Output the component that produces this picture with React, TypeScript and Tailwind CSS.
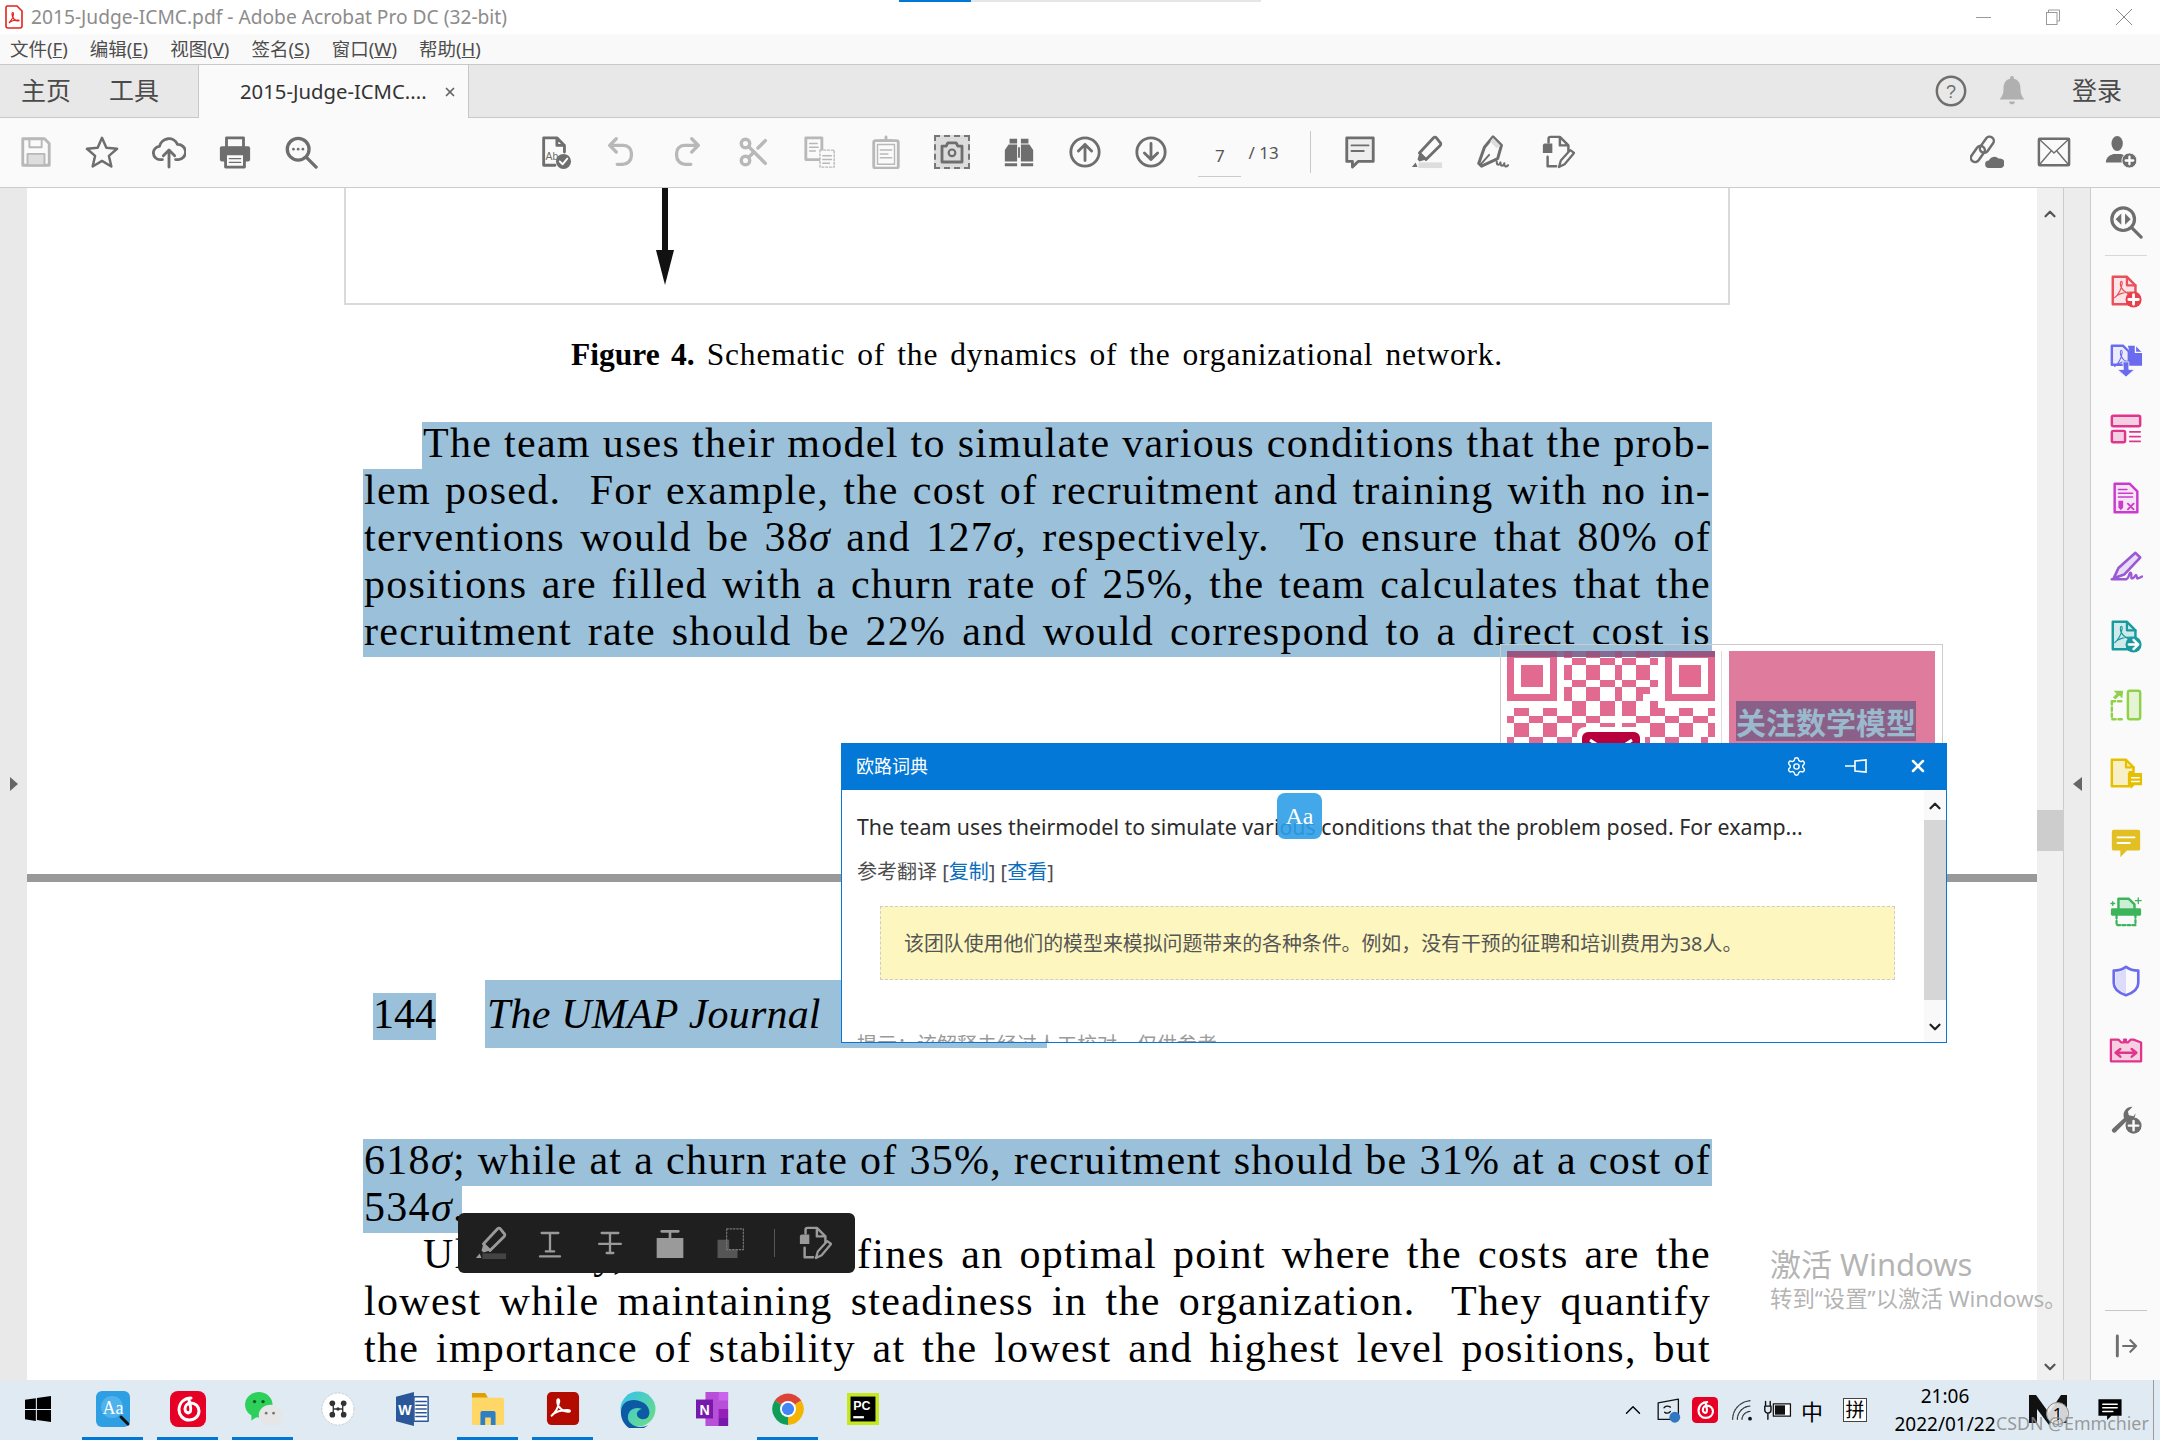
import React from 'react';
import { ChevronUp, ChevronDown, Settings, X, Scissors } from 'lucide-react';

const GRAY = '#6e6e6e';
const LIGHT = '#b8b8b8';

const Ic: React.FC<{ s?: number; w?: number; h?: number; vb?: string; children: React.ReactNode }> = ({ s = 34, w, h, vb = '0 0 36 36', children }) => (
    <svg width={w ?? s} height={h ?? s} viewBox={vb} fill="none" strokeLinecap="round" strokeLinejoin="round">
        {children}
    </svg>
);

const Swirl = ({ c, sw = 1.6 }: { c: string; sw?: number }) => (
    <path d="M6 25c4-3 7-9 8-15 0-3-2-3-2 0 0 6 6 11 11 11 3 0 3-2 0-2-6 0-14 2-17 6z" stroke={c} strokeWidth={sw} />
);

const Btn: React.FC<{ children: React.ReactNode; className?: string }> = ({ children, className }) => (
    <div className={'w-[66.3px] h-full flex items-center justify-center shrink-0 ' + (className ?? '')}>{children}</div>
);

const SaveIcon = () => (
    <Ic>
        <path d="M4 4h23l5 5v23H4z" stroke={LIGHT} strokeWidth="3" />
        <path d="M11 4h13v9H11z" stroke={LIGHT} strokeWidth="2" />
        <rect x="9" y="20" width="18" height="12" fill="#dedede" stroke={LIGHT} strokeWidth="2" />
    </Ic>
);
const StarIcon = () => (
    <Ic>
        <path d="M18 3l4.6 10.6 11.4 1-8.7 7.5 2.6 11.2L18 27.4 8.1 33.3l2.6-11.2L2 14.6l11.4-1z" stroke={GRAY} strokeWidth="2.6" />
    </Ic>
);
const CloudIcon = () => (
    <Ic>
        <path d="M11 26H9a7 7 0 0 1-1-14 10 10 0 0 1 19-2 8 8 0 0 1 1 16h-3" stroke={GRAY} strokeWidth="3" />
        <path d="M18 34V16M12 22l6-6 6 6" stroke={GRAY} strokeWidth="3" />
    </Ic>
);
const PrintIcon = () => (
    <Ic>
        <rect x="9" y="3" width="18" height="11" stroke={GRAY} strokeWidth="3" />
        <rect x="2" y="12" width="32" height="16" rx="2" fill={GRAY} />
        <rect x="8" y="20" width="20" height="14" fill="#fafafa" stroke={GRAY} strokeWidth="3" />
        <path d="M12 25h12M12 29h12" stroke={GRAY} strokeWidth="1.5" />
    </Ic>
);
const SearchDots = () => (
    <Ic>
        <circle cx="15" cy="15" r="11.5" stroke={GRAY} strokeWidth="3.5" />
        <path d="M24 24l10 10" stroke={GRAY} strokeWidth="3.5" />
        <circle cx="10" cy="15" r="1.4" fill={GRAY} />
        <circle cx="15" cy="15" r="1.4" fill={GRAY} />
        <circle cx="20" cy="15" r="1.4" fill={GRAY} />
    </Ic>
);
const DocCheck = () => (
    <Ic>
        <path d="M6 18V3h14l8 8v7M20 3v8h8M6 18v14h12" stroke={GRAY} strokeWidth="3" />
        <text x="8" y="26" fontSize="11" fill={GRAY} fontFamily="Liberation Sans">Ab</text>
        <circle cx="27" cy="28" r="8" fill={GRAY} />
        <path d="M23 28l3 3 5-6" stroke="#fff" strokeWidth="2" />
    </Ic>
);
const UndoIcon = ({ flip }: { flip?: boolean }) => (
    <Ic>
        <g transform={flip ? 'translate(36 0) scale(-1 1)' : undefined}>
            <path d="M13 4l-7 7 7 7M6 11h15a8 8 0 0 1 8 8v3a9 9 0 0 1-9 9h-6" stroke={LIGHT} strokeWidth="3.5" />
        </g>
    </Ic>
);
const CopyIcon = () => (
    <Ic>
        <rect x="3" y="3" width="17" height="23" stroke={LIGHT} strokeWidth="3" />
        <path d="M7 9h8M7 13h9M7 17h6" stroke={LIGHT} strokeWidth="1.6" />
        <rect x="18" y="16" width="15" height="18" fill="#fafafa" stroke={LIGHT} strokeWidth="1.5" strokeDasharray="2 2" />
        <path d="M21 22h9M21 26h9M21 30h7" stroke={LIGHT} strokeWidth="1.6" />
    </Ic>
);
const ClipIcon = () => (
    <Ic>
        <rect x="5" y="6" width="26" height="29" rx="2" stroke={LIGHT} strokeWidth="3" />
        <rect x="9" y="10" width="18" height="21" stroke={LIGHT} strokeWidth="1.5" />
        <path d="M12 6h12M18 2v4" stroke={LIGHT} strokeWidth="3" />
        <path d="M12 16h12M12 20h8M12 24h12" stroke={LIGHT} strokeWidth="1.6" />
    </Ic>
);
const CameraIcon = () => (
    <div className="w-[36px] h-[34px] bg-[#dcdcdc] border-2 border-dashed border-[#777777] flex items-center justify-center">
        <Ic s={30}>
            <path d="M6 11h5l2-4h10l2 4h5v19H6z" stroke={GRAY} strokeWidth="3.4" />
            <circle cx="18" cy="19" r="4" stroke={GRAY} strokeWidth="2.6" />
        </Ic>
    </div>
);
const BinocIcon = () => (
    <Ic>
        <path d="M8 4h8v5H8zM20 4h8v5h-8zM7 10h9v18H3V16zM20 10h9l4 6v12H20zM17 13h2v11h-2zM3 30h13v3H3zM20 30h13v3H20z" fill={GRAY} />
    </Ic>
);
const ArrowCircle = ({ down }: { down?: boolean }) => (
    <Ic>
        <circle cx="18" cy="18" r="15" stroke={GRAY} strokeWidth="3" />
        <path d={down ? 'M18 9v17M11 19l7 7 7-7' : 'M18 27V10M11 17l7-7 7 7'} stroke={GRAY} strokeWidth="3" />
    </Ic>
);
const CommentIcon = () => (
    <Ic>
        <path d="M4 3h28v25H16l-6 6v-6H4z" fill="#eeeeee" stroke={GRAY} strokeWidth="3" />
        <path d="M9 11h18M9 17h13" stroke={GRAY} strokeWidth="2" />
    </Ic>
);
const HighlightIcon = ({ c = GRAY, bar = '#dddddd', fill = 'none' }: { c?: string; bar?: string; fill?: string }) => (
    <Ic>
        <rect x="10" y="29" width="25" height="6" fill={bar} />
        <path d="M33 8l-4-5a2 2 0 0 0-3 0L11 19l7 7L33 11a2 2 0 0 0 0-3z" fill={fill} stroke={c} strokeWidth="3" />
        <path d="M11 19l-2 7 2 2 7-2z" fill={c} />
        <path d="M7 29l-4 5h6z" fill={c} />
    </Ic>
);
const SignIcon = () => (
    <Ic>
        <path d="M19 2l9 9-4 14-17 8-3-3 6-17z" stroke={GRAY} strokeWidth="3.2" />
        <path d="M19 3l8 8-4 3-7-7z" fill="#dddddd" />
        <path d="M6 31l9-10" stroke={GRAY} strokeWidth="2" />
        <path d="M23 28c0 5 3 4 4 1 0 5 3 4 4 1 0 4 2 4 4 2" stroke={GRAY} strokeWidth="2.2" />
    </Ic>
);
const DocEdit = ({ c = GRAY }: { c?: string }) => (
    <Ic>
        <path d="M2 11a2 2 0 0 1 2-2h8v10H2z" fill={c} />
        <path d="M8 8V4a2 2 0 0 1 2-2h10l9 9v6M20 2v9h9M7 23v10h9" stroke={c} strokeWidth="2.6" />
        <path d="M19 34l2-7 10-11 4 3-10 12z" stroke={c} strokeWidth="2.4" />
    </Ic>
);
const LinkCloud = () => (
    <Ic>
        <rect x="-1" y="15" width="19" height="9" rx="4.5" transform="rotate(-55 9 20)" stroke={GRAY} strokeWidth="2.6" />
        <rect x="9" y="6" width="19" height="9" rx="4.5" transform="rotate(-55 18 11)" stroke={GRAY} strokeWidth="2.6" />
        <path d="M20 35a4 4 0 0 1 0-8 6 6 0 0 1 10-2 5 5 0 0 1 3 10z" fill={GRAY} />
    </Ic>
);
const MailIcon = () => (
    <Ic>
        <rect x="2" y="4" width="32" height="28" rx="1" stroke={GRAY} strokeWidth="2.6" />
        <path d="M3 5l15 14L33 5M3 31l12-14M33 31L21 17" stroke={GRAY} strokeWidth="1.5" />
    </Ic>
);
const UserPlus = () => (
    <Ic>
        <ellipse cx="15" cy="9" rx="6" ry="8" fill={GRAY} />
        <path d="M3 29c0-6 5-8 8-9h8c3 1 5 2 6 4v5z" fill={GRAY} />
        <circle cx="28" cy="27" r="8" fill={GRAY} stroke="#fafafa" strokeWidth="1" />
        <path d="M28 23v8M24 27h8" stroke="#fff" strokeWidth="2.4" />
    </Ic>
);

const rail: React.ReactNode[] = [
    <Ic key="red">
        <path d="M4 3h15l9 9v20H4z" fill="#fde4e6" stroke="#e8505b" strokeWidth="2.6" />
        <path d="M19 3v9h9" stroke="#e8505b" strokeWidth="2.4" />
        <Swirl c="#e8505b" sw={1.2} />
        <circle cx="26" cy="27" r="8.5" fill="#e8404c" />
        <path d="M26 22v10M21 27h10" stroke="#fff" strokeWidth="3" />
    </Ic>,
    <Ic key="blue">
        <path d="M3 3h12l6 6v14H3z" fill="#ecebfd" stroke="#6a6ced" strokeWidth="2.6" />
        <path d="M20 3h8l7 7v14H22V10z" fill="#6a6ced" />
        <path d="M28 3v7h7" stroke="#fff" strokeWidth="1.4" />
        <Swirl c="#6a6ced" sw={1.1} />
        <path d="M15 20h6v8h6l-9 8-9-8h6z" fill="#6a6ced" stroke="#fafafa" strokeWidth="0.8" />
    </Ic>,
    <Ic key="layout">
        <rect x="3" y="4" width="30" height="11" rx="1.5" fill="#f6cfe3" stroke="#e0358c" strokeWidth="2.6" />
        <rect x="3" y="20" width="14" height="12" rx="1.5" fill="#f6cfe3" stroke="#e0358c" strokeWidth="2.6" />
        <path d="M22 21h11M22 26h11M22 31h11" stroke="#e0358c" strokeWidth="1.8" />
    </Ic>,
    <Ic key="form">
        <path d="M6 3h16l8 8v22H6z" fill="#f8e4f8" stroke="#c93cc9" strokeWidth="2.6" />
        <path d="M10 9h9M10 13h15M10 17h15" stroke="#c93cc9" strokeWidth="1.6" />
        <path d="M10 21h5v7l-2.5 3-2.500-3z" fill="#c93cc9" />
        <path d="M20 24l6 6M26 24l-6 6" stroke="#c93cc9" strokeWidth="2" />
    </Ic>,
    <Ic key="sign">
        <path d="M28 3l5 5-17 18-11 4 5-11z" fill="#e8dcf8" stroke="#9b59d6" strokeWidth="2.8" />
        <path d="M3 31h14" stroke="#9b59d6" strokeWidth="2.6" />
        <path d="M18 31c4-1 3-8 5-7s-1 7 2 6 3-5 4-3 0 4 2 3 2-1 4-2" stroke="#9b59d6" strokeWidth="2.4" />
    </Ic>,
    <Ic key="teal">
        <path d="M4 3h15l9 9v20H4z" fill="#cfeaea" stroke="#1a9a9e" strokeWidth="2.6" />
        <path d="M19 3v9h9" stroke="#1a9a9e" strokeWidth="2.4" />
        <Swirl c="#1a9a9e" sw={1.2} />
        <circle cx="26" cy="27" r="8.5" fill="#1a9a9e" />
        <path d="M21 27h8M26 22l5 5-5 5" stroke="#fff" strokeWidth="2.6" />
    </Ic>,
    <Ic key="green">
        <rect x="20" y="3" width="13" height="30" rx="2" fill="#e4f4d4" stroke="#8fd24a" strokeWidth="2.6" />
        <path d="M3 14h13M3 14v19h13" stroke="#8fd24a" strokeWidth="2.6" strokeDasharray="3.5 3" />
        <path d="M15 3L5 3l3 3-4 4 3 2 4-4 3 3z" fill="#8fd24a" />
    </Ic>,
    <Ic key="yellow">
        <path d="M3 3h15l8 8v5h-4v15H3z" fill="#f7efc5" stroke="#e6bf00" strokeWidth="2.6" />
        <path d="M18 3v8h8" stroke="#e6bf00" strokeWidth="2.4" />
        <path d="M20 17h15v13h-8l-4 4v-4h-3z" fill="#e6bf00" />
        <path d="M24 22h8M24 26h8" stroke="#fff" strokeWidth="1.6" />
    </Ic>,
    <Ic key="comment">
        <path d="M5 4h26a2 2 0 0 1 2 2v18a2 2 0 0 1-2 2H19l-7 7v-7H5a2 2 0 0 1-2-2V6a2 2 0 0 1 2-2z" fill="#e2c024" />
        <path d="M9 12h18M9 18h13" stroke="#fff" strokeWidth="2" />
    </Ic>,
    <Ic key="print">
        <path d="M10 14V4h11l6 6v4" fill="#cdeed6" stroke="#3cb55a" strokeWidth="2.6" />
        <rect x="2" y="14" width="32" height="8" rx="1.5" fill="#3cb55a" />
        <path d="M8 22v10h20V22" stroke="#3cb55a" strokeWidth="2.4" strokeDasharray="3 2.4" />
        <path d="M31 3v6M28 6h6M4 7v4M2 9h4" stroke="#3cb55a" strokeWidth="1.4" />
    </Ic>,
    <Ic key="shield">
        <path d="M18 3c4 3 9 4 13 4v13c0 7-7 11-13 13C12 31 5 27 5 20V7c4 0 9-1 13-4z" fill="#fafafa" stroke="#6a6ced" strokeWidth="2.8" />
        <path d="M18 5C14 8 10 9 7 9v11c0 6 6 9 11 11z" fill="#dcdcfa" />
    </Ic>,
    <Ic key="compress" vb="0 4 36 30">
        <path d="M2 8h8l3 3h3V8h2v3h2l3-3 3 0 8 3v20H2z" fill="#f6cfe3" stroke="#e0358c" strokeWidth="2.4" />
        <path d="M8 22h20M12 18l-5 4 5 4M24 18l5 4-5 4" stroke="#e0358c" strokeWidth="2.6" />
    </Ic>,
    <Ic key="wrench" vb="0 2 36 36">
        <path d="M4 30l12-11c-2-5 1-12 9-12l-5 5 1 4 5 1 2-3c0 6-5 11-10 9L7 34a2 2 0 0 1-3-4z" fill={GRAY} />
        <circle cx="26" cy="27" r="8.5" fill={GRAY} />
        <path d="M26 22v10M21 27h10" stroke="#fafafa" strokeWidth="2.6" />
    </Ic>,
];

const Qr = () => {
    const cells: React.ReactNode[] = [];
    const finder = (x: number, y: number) =>
        x >= 0 && x < 7 && y >= 0 && y < 7 && (x === 0 || y === 0 || x === 6 || y === 6 || (x > 1 && x < 5 && y > 1 && y < 5));
    const inFinder = (x: number, y: number) => (x < 8 && y < 8) || (x > 20 && y < 8);
    for (let y = 0; y < 13; y++) {
        for (let x = 0; x < 29; x++) {
            const h = Math.imul(x + 1, 2654435761) ^ Math.imul(y + 3, 40503017);
            const on = inFinder(x, y) ? finder(x, y) || finder(x - 22, y) : ((h >>> 13) & 255) < 125;
            if (on) cells.push(<rect key={x + '-' + y} x={x} y={y} width="1" height="1" fill="#e2698f" />);
        }
    }
    return (
        <svg width="208" height="92" viewBox="0 0 29 12.83" shapeRendering="crispEdges">
            {cells}
            <rect x="0" y="0" width="29" height="0.9" fill="#7d4f7c" opacity="0.75" />
        </svg>
    );
};

const Line: React.FC<{ children: React.ReactNode; hl?: boolean; indent?: boolean }> = ({ children, hl, indent }) => (
    <div className={'h-[47px] ' + (indent ? 'pl-[59px]' : '')}>
        <div className={'h-[47px] leading-[40px] pt-px pl-px pr-px tracking-[1.3px] [text-align-last:justify] ' + (hl ? 'bg-[#9bc0da]' : '')}>{children}</div>
    </div>
);

const tasks: { on?: boolean; icon: React.ReactNode }[] = [
    {
        icon: (
            <Ic s={26} vb="0 0 24 24">
                <path d="M0 3.5L10 2v10H0zM11 1.8L24 0v12H11zM0 13h10v10L0 21.5zM11 13h13v11l-13-1.8z" fill="#000" />
            </Ic>
        ),
    },
    {
        on: true,
        icon: (
            <Ic w={36} h={38}>
                <rect x="1" y="0" width="34" height="36" rx="6" fill="#2f9fe3" />
                <circle cx="17" cy="16" r="11" fill="#4fb2ec" />
                <text x="18" y="23" fontSize="18" fill="#fff" textAnchor="middle" fontFamily="Liberation Serif">Aa</text>
                <path d="M26 26l7 7" stroke="#111" strokeWidth="3" />
            </Ic>
        ),
    },
    {
        on: true,
        icon: (
            <Ic w={36} h={38}>
                <rect x="0" y="0" width="36" height="36" rx="8" fill="#e60026" />
                <path d="M21 7c-6 0-12 4-12 12 0 5 4 10 10 10s10-4 10-9-4-8-8-8-6 3-6 6 3 5 5 3c2-2 0-7-1-12" stroke="#fff" strokeWidth="3" />
            </Ic>
        ),
    },
    {
        on: true,
        icon: (
            <Ic w={38} h={38}>
                <ellipse cx="14" cy="14" rx="13" ry="12" fill="#2cd05a" />
                <path d="M7 23l0 6 6-4z" fill="#2cd05a" />
                <circle cx="10" cy="11" r="1.6" fill="#0b5c22" />
                <circle cx="18" cy="11" r="1.6" fill="#0b5c22" />
                <ellipse cx="25" cy="24" rx="11" ry="10" fill="#e6e6e6" />
                <path d="M29 32l3 4 0-6z" fill="#e6e6e6" />
                <circle cx="21" cy="22" r="1.3" fill="#777" />
                <circle cx="28" cy="22" r="1.3" fill="#777" />
            </Ic>
        ),
    },
    {
        icon: (
            <Ic>
                <circle cx="18" cy="18" r="17" fill="#fff" stroke="#cccccc" strokeWidth="1" strokeDasharray="2 2" />
                <path d="M13 12v12M23 12v12M13 18l10 0" stroke="#333" strokeWidth="1.4" />
                <circle cx="12" cy="12" r="3" fill="#333" />
                <circle cx="24" cy="12" r="3" fill="#333" />
                <circle cx="12" cy="24" r="3" fill="#333" />
                <circle cx="24" cy="24" r="3" fill="#333" />
                <circle cx="18" cy="18" r="1.8" fill="#333" />
            </Ic>
        ),
    },
    {
        icon: (
            <Ic>
                <path d="M0 5l19-5v36L0 31z" fill="#2b579a" />
                <rect x="19" y="5" width="15" height="26" fill="#fff" stroke="#2b579a" strokeWidth="1.6" />
                <path d="M21 10h11M21 14h11M21 18h11M21 22h11M21 26h11" stroke="#2b579a" strokeWidth="1.6" />
                <text x="9.5" y="24" fontSize="15" fontWeight="700" fill="#fff" textAnchor="middle" fontFamily="Liberation Sans">W</text>
            </Ic>
        ),
    },
    {
        on: true,
        icon: (
            <Ic>
                <path d="M1 1h14l3 5H1z" fill="#e0a000" />
                <rect x="1" y="6" width="34" height="29" rx="2" fill="#ffd766" />
                <path d="M10 35V22a2 2 0 0 1 2-2h12a2 2 0 0 1 2 2v13h-5v-8h-6v8z" fill="#2f7fc4" />
            </Ic>
        ),
    },
    {
        on: true,
        icon: (
            <Ic>
                <rect x="1" y="0" width="34" height="35" rx="5" fill="#b30b00" />
                <Swirl c="#fff" sw={2.2} />
            </Ic>
        ),
    },
    {
        icon: (
            <Ic w={36} h={38}>
                <defs>
                    <linearGradient id="edgeA" x1="0" y1="0" x2="1" y2="1">
                        <stop offset="0" stopColor="#35c1f1" />
                        <stop offset="1" stopColor="#6ee07b" />
                    </linearGradient>
                </defs>
                <circle cx="18" cy="18" r="17.5" fill="url(#edgeA)" />
                <path d="M1 20C2 9 14 6 24 12c6 4 7 12 3 15-5 3-11 0-10-5 1-3 4-4 5-4-8-3-15 2-14 10 1 4 6 8 12 8 4 0 6-1 8-2-4 4-9 5-13 5C8 39 0 30 1 20z" fill="#0c59a4" />
            </Ic>
        ),
    },
    {
        icon: (
            <Ic>
                <rect x="10" y="0" width="24" height="36" fill="#b84fd8" />
                <rect x="24" y="0" width="10" height="9" fill="#ca64ea" />
                <rect x="24" y="18" width="10" height="9" fill="#951fb7" />
                <rect x="24" y="27" width="10" height="9" fill="#7719aa" />
                <rect x="0" y="8" width="18" height="20" fill="#7719aa" />
                <text x="9" y="24" fontSize="15" fontWeight="700" fill="#fff" textAnchor="middle" fontFamily="Liberation Sans">N</text>
            </Ic>
        ),
    },
    {
        on: true,
        icon: (
            <Ic>
                <path d="M18 18L4 9a17 17 0 0 1 28 0z" fill="#db4437" />
                <path d="M18 18L32 9a17 17 0 0 1-14 26z" fill="#f4b400" />
                <path d="M18 18L18 35A17 17 0 0 1 4 9z" fill="#0f9d58" />
                <circle cx="18" cy="18" r="8.5" fill="#fff" />
                <circle cx="18" cy="18" r="6.5" fill="#4285f4" />
            </Ic>
        ),
    },
    {
        icon: (
            <Ic s={32}>
                <rect x="0" y="0" width="36" height="36" fill="#c6e81e" />
                <rect x="4" y="4" width="28" height="28" fill="#000" />
                <text x="7" y="19" fontSize="14" fontWeight="700" fill="#fff" fontFamily="Liberation Sans">PC</text>
                <rect x="7" y="26" width="12" height="2.5" fill="#fff" />
            </Ic>
        ),
    },
];

const App: React.FC = () => {
    return (
        <div className="relative w-[2160px] h-[1440px] overflow-hidden bg-white flex flex-col font-['Noto_Sans','Noto_Sans_CJK_SC',sans-serif]">
            {/* Title bar */}
            <div className="h-[34px] shrink-0 bg-white flex items-center">
                <div className="ml-[4px] w-[20px] flex justify-center">
                    <svg width="18" height="24" viewBox="0 0 18 24" fill="none">
                        <path d="M2 1h10l5 5v15a2 2 0 0 1-2 2H3a2 2 0 0 1-2-2V2z" fill="#fff" stroke="#e2231a" strokeWidth="1.6" />
                        <path d="M4 18c2-2 4-5 4.500-9 0-2-1.500-2-1.500 0 0 4 3 7 6 7 1.500 0 1.500-1 0-1-3 0-7 1-9 3z" stroke="#e2231a" strokeWidth="1.200" />
                    </svg>
                </div>
                <span className="ml-[7px] text-[19.2px] leading-[24px] text-[#8c8c8c]">2015-Judge-ICMC.pdf - Adobe Acrobat Pro DC (32-bit)</span>
                <div className="ml-auto flex h-full">
                    <div className="w-[69px] flex items-center justify-center">
                        <div className="w-[15px] h-px bg-[#999999]" />
                    </div>
                    <div className="w-[69px] flex items-center justify-center">
                        <svg width="16" height="16" viewBox="0 0 16 16" fill="none" stroke="#999999">
                            <path d="M3.500 3.500V1h11v11H12" />
                            <rect x="1.500" y="3.500" width="10.500" height="12" />
                        </svg>
                    </div>
                    <div className="w-[73px] flex items-center justify-center">
                        <svg width="18" height="18" viewBox="0 0 18 18" stroke="#888888">
                            <path d="M1 1l16 16M17 1L1 17" />
                        </svg>
                    </div>
                </div>
            </div>

            {/* Menu bar */}
            <div className="h-[30px] shrink-0 bg-[#f9f9f9] flex items-center pl-[10px] text-[18.5px] leading-[24px] text-[#4d4d4d] gap-[22px]">
                <span>文件(<u>F</u>)</span>
                <span>编辑(<u>E</u>)</span>
                <span>视图(<u>V</u>)</span>
                <span>签名(<u>S</u>)</span>
                <span>窗口(<u>W</u>)</span>
                <span>帮助(<u>H</u>)</span>
            </div>

            {/* Tabs */}
            <div className="h-[54px] shrink-0 bg-[#e8e8e8] border-y border-[#c8c8c8] flex items-stretch text-[#4a4a4a]">
                <div className="w-[198px] flex items-center pl-[21px] gap-[38px] text-[25px]">
                    <span>主页</span>
                    <span>工具</span>
                </div>
                <div className="w-[271px] -mb-px bg-[#fafafa] border-x border-[#c8c8c8] flex items-center pl-[41px] text-[20.3px] text-[#333333]">
                    <span>2015-Judge-ICMC....</span>
                    <X size={14} strokeWidth={3} className="ml-[16px] text-[#666666]" />
                </div>
                <div className="ml-auto flex items-center">
                    <Ic s={34}>
                        <circle cx="18" cy="18" r="15" stroke={GRAY} strokeWidth="2.6" />
                        <text x="18" y="25" fontSize="19" fill={GRAY} textAnchor="middle" fontFamily="Liberation Sans">?</text>
                    </Ic>
                    <div className="ml-[27px]">
                        <Ic s={34}>
                            <path d="M18 2c2 0 2 2 2 3 5 1 7 5 7 11 0 7 3 9 4 11H5c1-2 4-4 4-11 0-6 2-10 7-11 0-1 0-3 2-3zM15 29h6a3 3 0 0 1-6 0z" fill="#b0b0b0" />
                        </Ic>
                    </div>
                    <span className="ml-[43px] mr-[38px] text-[25px]">登录</span>
                </div>
            </div>

            {/* Toolbar */}
            <div className="h-[70px] shrink-0 bg-[#fafafa] border-b border-[#cccccc] flex items-center pl-[3px] pb-[2px]">
                <Btn><SaveIcon /></Btn>
                <Btn><StarIcon /></Btn>
                <Btn><CloudIcon /></Btn>
                <Btn><PrintIcon /></Btn>
                <Btn><SearchDots /></Btn>
                <Btn className="ml-[187px]"><DocCheck /></Btn>
                <Btn><UndoIcon /></Btn>
                <Btn><UndoIcon flip /></Btn>
                <Btn><Scissors size={34} strokeWidth={2.4} color={LIGHT} className="-scale-x-100 rotate-180" /></Btn>
                <Btn><CopyIcon /></Btn>
                <Btn><ClipIcon /></Btn>
                <Btn><CameraIcon /></Btn>
                <Btn><BinocIcon /></Btn>
                <Btn><ArrowCircle /></Btn>
                <Btn><ArrowCircle down /></Btn>
                <div className="ml-[14px] w-[43px] h-[40px] mt-[10px] border-b border-[#cccccc] flex items-center justify-center text-[17px] text-[#555555]">7</div>
                <span className="ml-[7px] mt-[2px] w-[32px] text-[17px] text-[#555555] whitespace-nowrap">/ 13</span>
                <div className="ml-[30px] w-px h-[42px] bg-[#c8c8c8]" />
                <Btn className="ml-[15px]"><CommentIcon /></Btn>
                <Btn><HighlightIcon /></Btn>
                <Btn><SignIcon /></Btn>
                <Btn><DocEdit /></Btn>
                <div className="ml-auto flex h-full pr-[7px]">
                    <Btn><LinkCloud /></Btn>
                    <Btn><MailIcon /></Btn>
                    <Btn><UserPlus /></Btn>
                </div>
            </div>

            {/* Main */}
            <div className="relative flex-1 flex min-h-0">
                <div className="w-[27px] bg-[#e9e9e9] flex items-center justify-center">
                    <div className="w-0 h-0 border-y-[7px] border-y-transparent border-l-[8px] border-l-[#666666]" />
                </div>

                {/* PDF page */}
                <div className="flex-1 bg-white overflow-hidden text-black text-[42px] font-['Liberation_Serif',serif]">
                    <div className="ml-[317px] w-[1386px] h-[117px] border-x-2 border-b-2 border-[#dadada] pl-[309px]">
                        <svg width="20" height="97" viewBox="0 0 20 97">
                            <path d="M7 0h6v66h-6z" fill="#111" />
                            <path d="M1 62h18l-9 35z" fill="#111" />
                        </svg>
                    </div>
                    <div className="ml-[544px] w-[932px] mt-[30px] text-[31.500px] leading-[40px] tracking-[0.8px] [text-align-last:justify]">
                        <b className="tracking-normal">Figure 4.</b> Schematic of the dynamics of the organizational network.
                    </div>
                    <div className="ml-[336px] w-[1349px] mt-[47px]">
                        <Line hl indent>The team uses their model to simulate various conditions that the prob-</Line>
                        <Line hl>lem posed.&nbsp; For example, the cost of recruitment and training with no in-</Line>
                        <Line hl>terventions would be 38<i>σ</i> and 127<i>σ</i>, respectively.&nbsp; To ensure that 80% of</Line>
                        <Line hl>positions are filled with a churn rate of 25%, the team calculates that the</Line>
                        <Line hl>recruitment rate should be 22% and would correspond to a direct cost is</Line>
                    </div>
                    <div className="mt-[217px] h-[8px] bg-[#999999]" />
                    <div className="mt-[98px] ml-[346px] flex items-start leading-[40px]">
                        <div className="mt-[13px] w-[63px] h-[47px] pt-px bg-[#9bc0da] text-center">144</div>
                        <div className="ml-[49px] w-[562px] h-[68px] pt-[14px] pl-[2px] bg-[#9bc0da] italic tracking-[0.2px]">The UMAP Journal</div>
                    </div>
                    <div className="ml-[336px] w-[1349px] mt-[91px]">
                        <Line hl>618<i>σ</i>; while at a churn rate of 35%, recruitment should be 31% at a cost of</Line>
                        <div className="w-[99px] h-[47px] leading-[40px] pt-px pl-px tracking-[1.3px] bg-[#9bc0da] whitespace-nowrap">534<i>σ</i>.</div>
                        <Line indent>Ultimately, the team defines an optimal point where the costs are the</Line>
                        <Line>lowest while maintaining steadiness in the organization.&nbsp; They quantify</Line>
                        <Line>the importance of stability at the lowest and highest level positions, but</Line>
                    </div>
                </div>

                {/* Scrollbar */}
                <div className="w-[26px] bg-[#f0f0f0] flex flex-col items-center">
                    <ChevronUp size={18} strokeWidth={3} className="mt-[17px] text-[#555555]" />
                    <div className="mt-[587px] w-full h-[41px] bg-[#cdcdcd]" />
                    <ChevronDown size={18} strokeWidth={3} className="mt-auto mb-[4px] text-[#555555]" />
                </div>

                <div className="w-[28px] bg-[#ececec] border-x border-[#cccccc] flex items-center justify-center">
                    <div className="w-0 h-0 border-y-[7px] border-y-transparent border-r-[9px] border-r-[#666666]" />
                </div>

                {/* Tools rail */}
                <div className="w-[69px] bg-[#fafafa] flex flex-col items-center">
                    <div className="h-[67px] w-full flex items-center justify-center">
                        <Ic>
                            <circle cx="15" cy="15" r="12" stroke={GRAY} strokeWidth="3.4" />
                            <path d="M24 24l10 10" stroke={GRAY} strokeWidth="3.4" />
                            <path d="M13 9v12l-6-6zM17 9v12l6-6z" fill={GRAY} />
                        </Ic>
                    </div>
                    <div className="w-[42px] h-px bg-[#d8d8d8] shrink-0" />
                    {rail.map((icon, i) => (
                        <div key={i} className="h-[69px] w-full flex items-center justify-center shrink-0">
                            {icon}
                        </div>
                    ))}
                    <div className="mt-auto w-[42px] h-px bg-[#c8c8c8] shrink-0" />
                    <div className="h-[69px] flex items-center justify-center">
                        <Ic s={26}>
                            <path d="M6 4v28" stroke={GRAY} strokeWidth="4" />
                            <path d="M14 18h18M24 10l8 8-8 8" stroke={GRAY} strokeWidth="3" />
                        </Ic>
                    </div>
                </div>

                {/* QR ad behind the dictionary window */}
                <div className="absolute left-[1500px] top-[456px] w-[443px] h-[100px] border border-[#cccccc] flex pl-[6px] pt-[6px]">
                    <div className="relative w-[208px]">
                        <Qr />
                        <div className="absolute left-[70px] top-[76px] w-[68px] h-[40px] rounded-[8px] bg-white p-[5px]">
                            <div className="relative h-full rounded-[6px] bg-[#b8003c] overflow-hidden">
                                <svg width="58" height="30" viewBox="0 0 58 30" fill="none" className="absolute left-0 top-0">
                                    <path d="M8 8l21 14L50 8" stroke="#fff" strokeWidth="3" />
                                </svg>
                            </div>
                        </div>
                    </div>
                    <div className="ml-[6px] w-px h-full bg-[#dddddd]" />
                    <div className="ml-[7px] w-[206px] h-[92px] bg-[#df7b9c] flex flex-col justify-end pl-[7px] pb-[2px]">
                        <div className="w-[180px] h-[40px] bg-[#8b6088] text-[#9ab9cc] text-[30px] leading-[40px] font-semibold text-center whitespace-nowrap font-['Noto_Sans_CJK_SC',sans-serif]">关注数学模型</div>
                    </div>
                </div>

                {/* Dictionary popup */}
                <div className="absolute left-[841px] top-[555px] w-[1106px] h-[300px] bg-white border border-[#0378d7] flex flex-col">
                    <div className="h-[46px] shrink-0 bg-[#0378d7] flex items-center text-white pl-[14px]">
                        <span className="text-[18px] pb-[2px]">欧路词典</span>
                        <Settings size={21} strokeWidth={1.6} className="ml-auto mr-[37px] mb-[2px]" />
                        <svg width="26" height="16" viewBox="0 0 26 16" fill="none" stroke="#fff" strokeWidth="1.6" className="mr-[38px] mb-[2px]">
                            <path d="M1 8h10M11 3l11-1v12l-11-1z" />
                        </svg>
                        <X size={20} strokeWidth={3} className="mr-[18px] mb-[2px]" />
                    </div>
                    <div className="flex-1 flex min-h-0">
                        <div className="flex-1 overflow-hidden pl-[15px]">
                            <div className="mt-[23px] h-[28px] leading-[28px] w-[960px] text-[21.35px] text-[#2b2b2b] whitespace-nowrap">The team uses theirmodel to simulate various conditions that the problem posed. For examp...</div>
                            <div className="mt-[17px] h-[28px] leading-[28px] text-[20px] text-[#4d4d4d]">
                                参考翻译 [<span className="text-[#0a6ebd]">复制</span>] [<span className="text-[#0a6ebd]">查看</span>]
                            </div>
                            <div className="mt-[20px] ml-[23px] w-[1015px] h-[74px] bg-[#fdf7bf] border border-dashed border-[#cccccc] flex items-center pl-[23px] pt-[2px] text-[19.9px] text-[#555555] whitespace-nowrap">
                                该团队使用他们的模型来模拟问题带来的各种条件。例如，没有干预的征聘和培训费用为38人。
                            </div>
                            <div className="mt-[51px] h-[28px] leading-[28px] text-[20px] text-[#9a9a9a] whitespace-nowrap">提示：该解释未经过人工校对，仅供参考</div>
                        </div>
                        <div className="w-[22px] shrink-0 flex flex-col items-center bg-[#f9f9f9]">
                            <ChevronUp size={18} strokeWidth={3} className="mt-[7px] text-[#222222]" />
                            <div className="mt-[5px] w-full h-[180px] bg-[#d6d6d6]" />
                            <ChevronDown size={18} strokeWidth={3} className="mt-auto mb-[6px] text-[#222222]" />
                        </div>
                    </div>
                    <div className="absolute left-[435px] top-[49px] w-[45px] h-[46px] rounded-[8px] bg-[#2f9fe8]/90 flex items-center justify-center text-white text-[24px] font-['Liberation_Serif',serif]">Aa</div>
                </div>

                {/* Markup toolbar */}
                <div className="absolute left-[458px] top-[1025px] w-[397px] h-[60px] rounded-[6px] bg-[#1f1f1f] flex items-center pl-[2px]">
                    <div className="w-[60px] flex justify-center">
                        <HighlightIcon c="#9a9a9a" bar="#444444" />
                    </div>
                    <div className="w-[60px] flex justify-center">
                        <Ic s={30}>
                            <path d="M8 6h20M18 6v22M13 28h10M6 34h24" stroke="#9a9a9a" strokeWidth="2.800" />
                        </Ic>
                    </div>
                    <div className="w-[60px] flex justify-center">
                        <Ic s={30}>
                            <path d="M8 6h20M18 6v24M14 30h8M5 19h26" stroke="#9a9a9a" strokeWidth="2.800" />
                        </Ic>
                    </div>
                    <div className="w-[60px] flex justify-center">
                        <Ic s={30}>
                            <path d="M8 4h20M18 4v8" stroke="#9a9a9a" strokeWidth="3.200" />
                            <rect x="2" y="12" width="32" height="24" fill="#9a9a9a" />
                        </Ic>
                    </div>
                    <div className="w-[60px] flex justify-center">
                        <Ic s={30}>
                            <path d="M3 14h14v12h10v10H3z" fill="#555555" />
                            <rect x="14" y="1" width="20" height="25" stroke="#777777" strokeWidth="1.400" strokeDasharray="2 2" />
                        </Ic>
                    </div>
                    <div className="ml-[14px] w-px h-[28px] bg-[#555555]" />
                    <div className="ml-[18px] w-[44px] flex justify-center">
                        <DocEdit c="#9a9a9a" />
                    </div>
                </div>

                {/* Activation watermark */}
                <div className="absolute left-[1770px] top-[1057px] text-[#a0a0a0]/80 pointer-events-none whitespace-nowrap">
                    <div className="text-[31px] leading-[38px]">激活 Windows</div>
                    <div className="mt-[2px] text-[22.4px] leading-[28px]">转到“设置”以激活 Windows。</div>
                </div>
            </div>

            {/* Taskbar */}
            <div className="h-[60px] shrink-0 bg-[#dfeaf3] flex items-stretch">
                <div className="flex">
                    {tasks.map((t, i) => (
                        <div key={i} className="w-[75px] flex flex-col">
                            <div className="flex-1 flex items-center justify-center">{t.icon}</div>
                            <div className={t.on ? 'h-[3px] mx-[7px] bg-[#0078d7]' : 'h-[3px]'} />
                        </div>
                    ))}
                </div>
                <div className="ml-auto w-[545px] flex items-center text-black">
                    <div className="w-[36px] flex justify-center">
                        <ChevronUp size={26} strokeWidth={1.300} />
                    </div>
                    <div className="w-[36px] flex justify-center">
                        <Ic s={26}>
                            <path d="M3 8l28-5v28H3z" stroke="#111" strokeWidth="1.800" />
                            <path d="M11 15c2-3 6-3 9-1M20 20c-2 3-6 3-8 1" stroke="#111" strokeWidth="1.800" />
                            <circle cx="26" cy="28" r="7.500" fill="#3277c4" />
                        </Ic>
                    </div>
                    <div className="w-[36px] flex justify-center">
                        <Ic s={26}>
                            <rect x="0" y="0" width="36" height="36" rx="6" fill="#e60026" />
                            <path d="M21 7c-6 0-12 4-12 12 0 5 4 10 10 10s10-4 10-9-4-8-8-8-6 3-6 6 3 5 5 3c2-2 0-7-1-12" stroke="#fff" strokeWidth="3" />
                        </Ic>
                    </div>
                    <div className="w-[38px] flex justify-center">
                        <Ic s={24}>
                            <path d="M4 32C4 18 14 6 30 4M11 32c0-10 8-19 19-20M18 32c0-6 5-11 12-12" stroke="#333" strokeWidth="1.800" strokeDasharray="3 1.500" />
                            <circle cx="30" cy="31" r="2.800" fill="#111" />
                        </Ic>
                    </div>
                    <div className="w-[33px] flex justify-center">
                        <Ic w={28} h={22} vb="0 0 36 28">
                            <path d="M2 3v6M8 3v6M1 9h8v5a4 4 0 0 1-8 0zM5 18v8" stroke="#111" strokeWidth="1.800" />
                            <rect x="12" y="6" width="22" height="16" fill="#fff" stroke="#111" strokeWidth="1.600" />
                            <rect x="14" y="8" width="13" height="12" fill="#111" />
                        </Ic>
                    </div>
                    <div className="w-[36px] text-center text-[22px] font-['Noto_Sans_CJK_SC',sans-serif]">中</div>
                    <div className="w-[50px] flex justify-center">
                        <div className="w-[24px] h-[24px] bg-white border border-[#444444] flex items-center justify-center text-[19px] leading-none">拼</div>
                    </div>
                    <div className="w-[130px] flex flex-col items-center text-[19px] leading-[28px]">
                        <span>21:06</span>
                        <span>2022/01/22</span>
                    </div>
                    <div className="w-[78px] flex justify-center">
                        <div className="relative w-[40px] h-[30px]">
                            <svg width="40" height="30" viewBox="0 0 40 30">
                                <path d="M0 0h7l13 18L32 0h6v28h-7V14L20 30 8 14v14H0z" fill="#111" />
                            </svg>
                            <div className="absolute left-[17px] top-[7px] w-[23px] h-[23px] rounded-full bg-[#eaeaea]/90 border border-[#888888] text-center text-[17px] leading-[21px]">1</div>
                        </div>
                    </div>
                    <div className="w-[44px] flex justify-center">
                        <Ic s={26}>
                            <path d="M2 3h32v23H20l-6 6v-6H2z" fill="#000" />
                            <path d="M8 10h20M8 15h20M8 20h14" stroke="#fff" strokeWidth="2" />
                        </Ic>
                    </div>
                    <div className="ml-[21px] w-px h-full bg-[#9a9a9a]" />
                </div>
            </div>

            {/* CSDN stamp */}
            <div className="absolute left-[1996px] top-[1409px] text-[17.8px] leading-[28px] text-[#8a8a8a]/85 whitespace-nowrap">CSDN @Emmchier</div>

            {/* Loading strip */}
            <div className="absolute left-[899px] top-0 w-[362px] h-[2px] bg-[#e6e6e6]">
                <div className="w-[72px] h-full bg-[#0078d7]" />
            </div>
        </div>
    );
};

export default App;
